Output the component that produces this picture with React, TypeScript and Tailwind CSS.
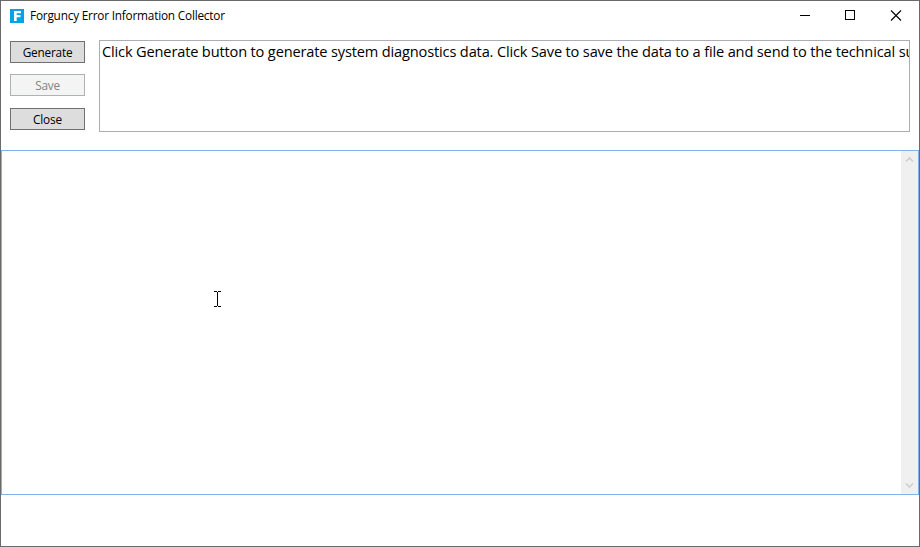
import type { ReactNode } from "react";

function AppIcon() {
  return (
    <svg className="block" width="14" height="14" viewBox="0 0 14 14">
      <rect width="14" height="14" fill="#00a2e8" />
      <path d="M4 2h7v2.3H6.7v1.7h3.8v2.2H6.7V12H4z" fill="#fff" />
    </svg>
  );
}

function WindowControls() {
  return (
    <div className="ml-auto flex h-[29px] items-center pr-[17px] text-black">
      <svg className="block" width="11" height="11" viewBox="0 0 11 11" shapeRendering="crispEdges">
        <path d="M0.5 5h10v1h-10z" fill="currentColor" />
      </svg>
      <svg className="ml-[35px] block" width="10" height="11" viewBox="0 0 10 11">
        <rect x="0.5" y="0.5" width="9" height="9" fill="none" stroke="currentColor" />
      </svg>
      <svg className="ml-[35px] block" width="12" height="11" viewBox="0 0 12 11">
        <path d="M1 .5l10 10M11 .5l-10 10" fill="none" stroke="currentColor" strokeWidth="1.1" />
      </svg>
    </div>
  );
}

function PushButton({ children, disabled = false }: { children: ReactNode; disabled?: boolean }) {
  return (
    <button
      disabled={disabled}
      className="flex h-[22px] w-[75px] items-center justify-center border border-[#707070] bg-[#dddddd] pb-px text-[11.8px] leading-4 tracking-[-0.2px] text-black disabled:border-[#adb2b5] disabled:bg-[#f4f4f4] disabled:text-[#838383]"
    >
      {children}
    </button>
  );
}

function Chevron({ d }: { d: string }) {
  return (
    <svg className="block" width="9" height="7" viewBox="0 0 9 7">
      <path d={d} fill="none" stroke="#cfcfcf" strokeWidth="1.7" />
    </svg>
  );
}

export default function App() {
  return (
    <div className="relative flex h-[547px] w-[920px] flex-col overflow-hidden border border-[#6b696b] bg-white font-['Open_Sans','Noto_Sans',sans-serif]">
      <header className="flex h-[39px] shrink-0 items-start pl-[9px]">
        <div className="flex h-[29px] items-center gap-[6px]">
          <AppIcon />
          <span className="whitespace-nowrap pb-[2px] text-[11.8px] leading-4 tracking-[-0.2px] text-black">Forguncy Error Information Collector</span>
        </div>
        <WindowControls />
      </header>
      <section className="flex h-[110px] shrink-0 gap-[14px] px-[9px]">
        <div className="flex flex-col pt-px">
          <PushButton>Generate</PushButton>
          <div className="mb-3 mt-[11px]">
            <PushButton disabled>Save</PushButton>
          </div>
          <PushButton>Close</PushButton>
        </div>
        <div className="h-[92px] min-w-0 flex-1 overflow-hidden whitespace-nowrap border border-[#abadb3] pl-[2px] text-[14.6px] leading-5 tracking-[-0.157px] text-black">
          Click Generate button to generate system diagnostics data. Click Save to save the data to a file and send to the technical su
        </div>
      </section>
      <main className="flex h-[345px] shrink-0 border border-[#7eb4ea] bg-white">
        <div className="flex-1" />
        <div className="flex w-[17px] flex-col items-center justify-between bg-[#f0f0f0] py-[5px]">
          <Chevron d="M1 5.5l3.5-3.5l3.5 3.5" />
          <Chevron d="M1 1.5l3.5 3.5l3.5-3.5" />
        </div>
      </main>
      <svg className="absolute left-[213px] top-[290px]" width="7" height="16" viewBox="0 0 7 16" shapeRendering="crispEdges">
        <path d="M0 0h3v1H0zM4 0h3v1H4zM3 1h1v14H3zM0 15h3v1H0zM4 15h3v1H4z" fill="#000" />
      </svg>
    </div>
  );
}
